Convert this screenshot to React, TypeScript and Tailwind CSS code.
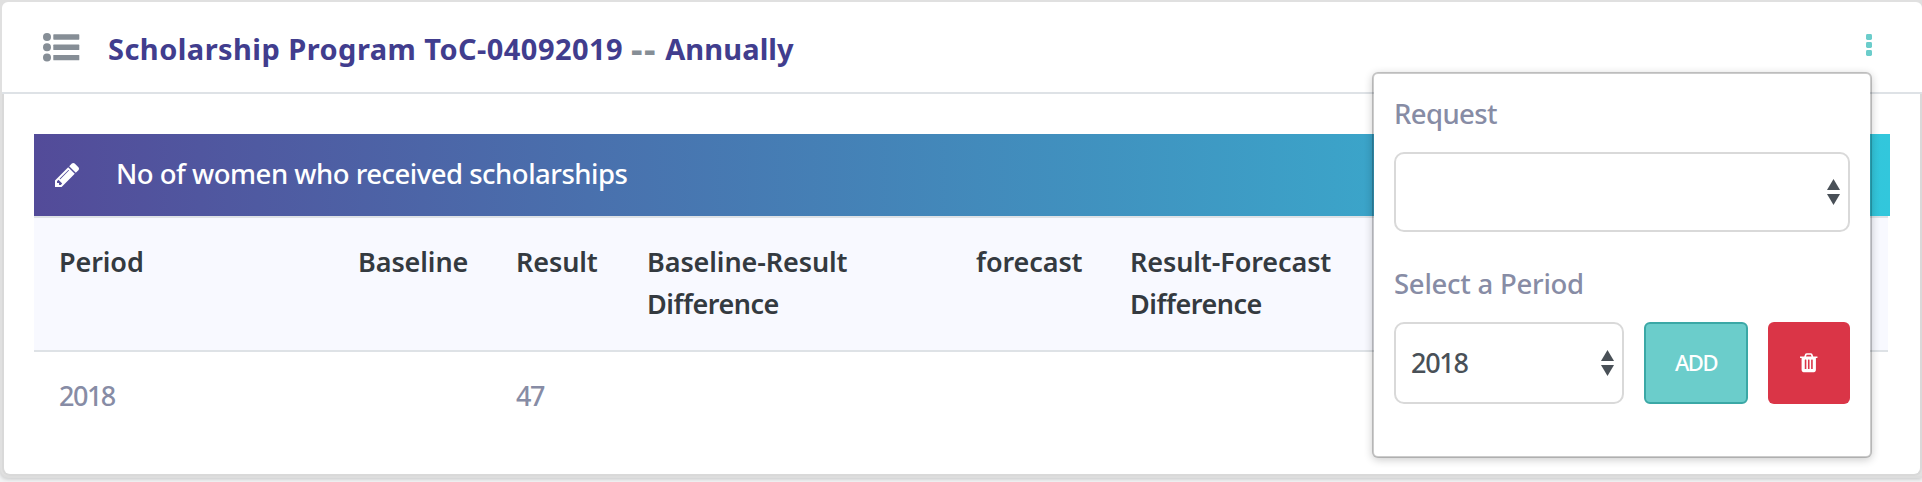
const columns = [
    { lines: ['Period'], width: 'w-[299px]' },
    { lines: ['Baseline'], width: 'w-[158px]' },
    { lines: ['Result'], width: 'w-[131px]' },
    { lines: ['Baseline-Result', 'Difference'], width: 'w-[329px]' },
    { lines: ['forecast'], width: 'w-[154px]' },
    { lines: ['Result-Forecast', 'Difference'], width: 'w-[783px]' },
]

const rows = [['2018', '', '47', '', '', '']]

const ListIcon = () => (
    <svg width="37" height="29" viewBox="0 0 37 29" fill="#868e96">
        {[0, 10.3, 20.6].map((y) => (
            <g key={y}>
                <circle cx="4" cy={y + 4} r="4" />
                <rect x="10.3" y={y + 1.3} width="26" height="5.4" rx="0.6" />
            </g>
        ))}
    </svg>
)

const DotsIcon = () => (
    <svg width="6" height="22" viewBox="0 0 6 22" fill="#6bcdcb">
        {[0, 8, 16].map((y) => (
            <rect key={y} y={y} width="6" height="6" rx="1.4" />
        ))}
    </svg>
)

const PencilIcon = () => (
    <svg width="24" height="24" viewBox="128 149 1515 1515" fill="currentColor">
        <path d="M491 1536l91-91-235-235-91 91v107h128v128h107zm523-928q0-22-22-22-10 0-17 7l-542 542q-7 7-7 17 0 22 22 22 10 0 17-7l542-542q7-7 7-17zm-54-192l416 416-832 832h-416v-416zm683 96q0 53-37 90l-166 166-416-416 166-165q36-38 90-38 53 0 91 38l235 234q37 39 37 91z" />
    </svg>
)

const TrashIcon = () => (
    <svg width="17.5" height="19.5" viewBox="192 128 1408 1536" fill="currentColor">
        <path d="M704 1376v-704q0-14-9-23t-23-9h-64q-14 0-23 9t-9 23v704q0 14 9 23t23 9h64q14 0 23-9t9-23zm256 0v-704q0-14-9-23t-23-9h-64q-14 0-23 9t-9 23v704q0 14 9 23t23 9h64q14 0 23-9t9-23zm256 0v-704q0-14-9-23t-23-9h-64q-14 0-23 9t-9 23v704q0 14 9 23t23 9h64q14 0 23-9t9-23zm-544-992h448l-48-117q-7-9-17-11h-317q-10 2-17 11zm928 32v64q0 14-9 23t-23 9h-96v948q0 83-47 143.500t-113 60.500h-832q-66 0-113-58.500t-47-141.500v-952h-96q-14 0-23-9t-9-23v-64q0-14 9-23t23-9h309l70-167q15-37 54-63t79-26h320q40 0 79 26t54 63l70 167h309q14 0 23 9t9 23z" />
    </svg>
)

const SelectBox = ({ value, className }: { value: string; className: string }) => (
    <div
        className={`flex items-center justify-between border-2 border-[#d9d9d9] rounded-[10px] pl-[15px] pr-2 text-[27px] font-medium tracking-[-1.3px] text-[#495057] ${className}`}
    >
        <span>{value}</span>
        <svg width="13" height="26" viewBox="0 0 13 26" fill="#495057">
            <path d="M6.500 0L13 11H0z" />
            <path d="M6.500 26L13 15H0z" />
        </svg>
    </div>
)

const RequestMenu = () => (
    <div className="absolute left-[1372px] top-[72px] w-[500px] h-[386px] bg-white bg-clip-padding border-2 border-black/20 rounded-md shadow-[0_2px_8px_rgba(0,0,0,0.2)] p-5">
        <p className="h-10 leading-10 text-[27.5px] font-medium tracking-[-0.6px] text-[#878ca5]">
            Request
        </p>
        <SelectBox value="" className="mt-[18px] h-20" />
        <p className="mt-8 h-10 leading-10 text-[27.5px] font-medium tracking-[-0.25px] text-[#878ca5]">
            Select a Period
        </p>
        <div className="mt-[18px] flex gap-5 h-[82px]">
            <SelectBox value="2018" className="w-[230px]" />
            <button className="w-[104px] pb-0.5 rounded-md border-2 border-[#3ba8a6] bg-[#6bcdcb] text-white text-[22px] font-medium tracking-[-1.5px]">
                ADD
            </button>
            <button className="w-[82px] rounded-md bg-[#da3547] text-white flex items-center justify-center">
                <TrashIcon />
            </button>
        </div>
    </div>
)

const App = () => {
    return (
        <div className="relative w-[1922px] h-[482px] overflow-hidden bg-[#f3f4f5] font-['Noto_Sans',sans-serif]">
            <div className="h-[476px] pl-0.5 pt-0.5 bg-[#e0e0e0] rounded-bl-lg shadow-[0_2px_0_#dddddd,0_3px_4px_rgba(0,0,0,0.2)]">
                <div className="flex items-center h-[92px] pl-[41px] pr-[50px] bg-white border-b-2 border-[#dee2e6] rounded-t-md">
                    <ListIcon />
                    <h4 className="flex-1 pl-7 pt-[3px] text-[29px] leading-[44px] font-bold tracking-[0.45px] text-[#413d8e]">
                        Scholarship Program ToC-04092019{' '}
                        <span className="align-[-2px] text-[36px] leading-none text-[#868e96] tracking-[1.5px]">
                            --
                        </span>{' '}
                        <span className="tracking-[0.1px]">Annually</span>
                    </h4>
                    <div className="pb-1">
                        <DotsIcon />
                    </div>
                </div>
                <div className="h-[382px] bg-white border-2 border-t-0 border-[#d9d9d9] rounded-b-lg pl-[30px] pt-10">
                    <div className="flex items-center w-[1856px] h-[82px] pl-[21px] text-white bg-linear-to-r/srgb from-[#534b99] to-[#32c7dc]">
                        <PencilIcon />
                        <span className="pl-[37px] pb-0.5 text-[27.5px] font-medium tracking-[-0.5px]">
                            No of women who received scholarships
                        </span>
                    </div>
                    <table className="table-fixed w-[1854px] border-collapse text-left">
                        <thead>
                            <tr className="h-[134px] bg-[#f8f9ff] border-y-2 border-[#dee2e6] text-[#343a40] text-[27px]">
                                {columns.map((col, i) => (
                                    <th
                                        key={i}
                                        className={`align-top pl-[25px] pt-[23px] font-semibold leading-[42px] ${col.width}`}
                                    >
                                        {col.lines.map((line) => (
                                            <span
                                                key={line}
                                                className="block tracking-[-0.1px] even:tracking-[-0.5px]"
                                            >
                                                {line}
                                            </span>
                                        ))}
                                    </th>
                                ))}
                            </tr>
                        </thead>
                        <tbody>
                            {rows.map((row, i) => (
                                <tr
                                    key={i}
                                    className="text-[#878ca5] text-[27px] font-medium tracking-[-1.5px]"
                                >
                                    {row.map((cell, j) => (
                                        <td key={j} className="pl-[25px] pt-[23px] leading-[42px]">
                                            {cell}
                                        </td>
                                    ))}
                                </tr>
                            ))}
                        </tbody>
                    </table>
                </div>
            </div>
            <RequestMenu />
        </div>
    )
}

export default App
